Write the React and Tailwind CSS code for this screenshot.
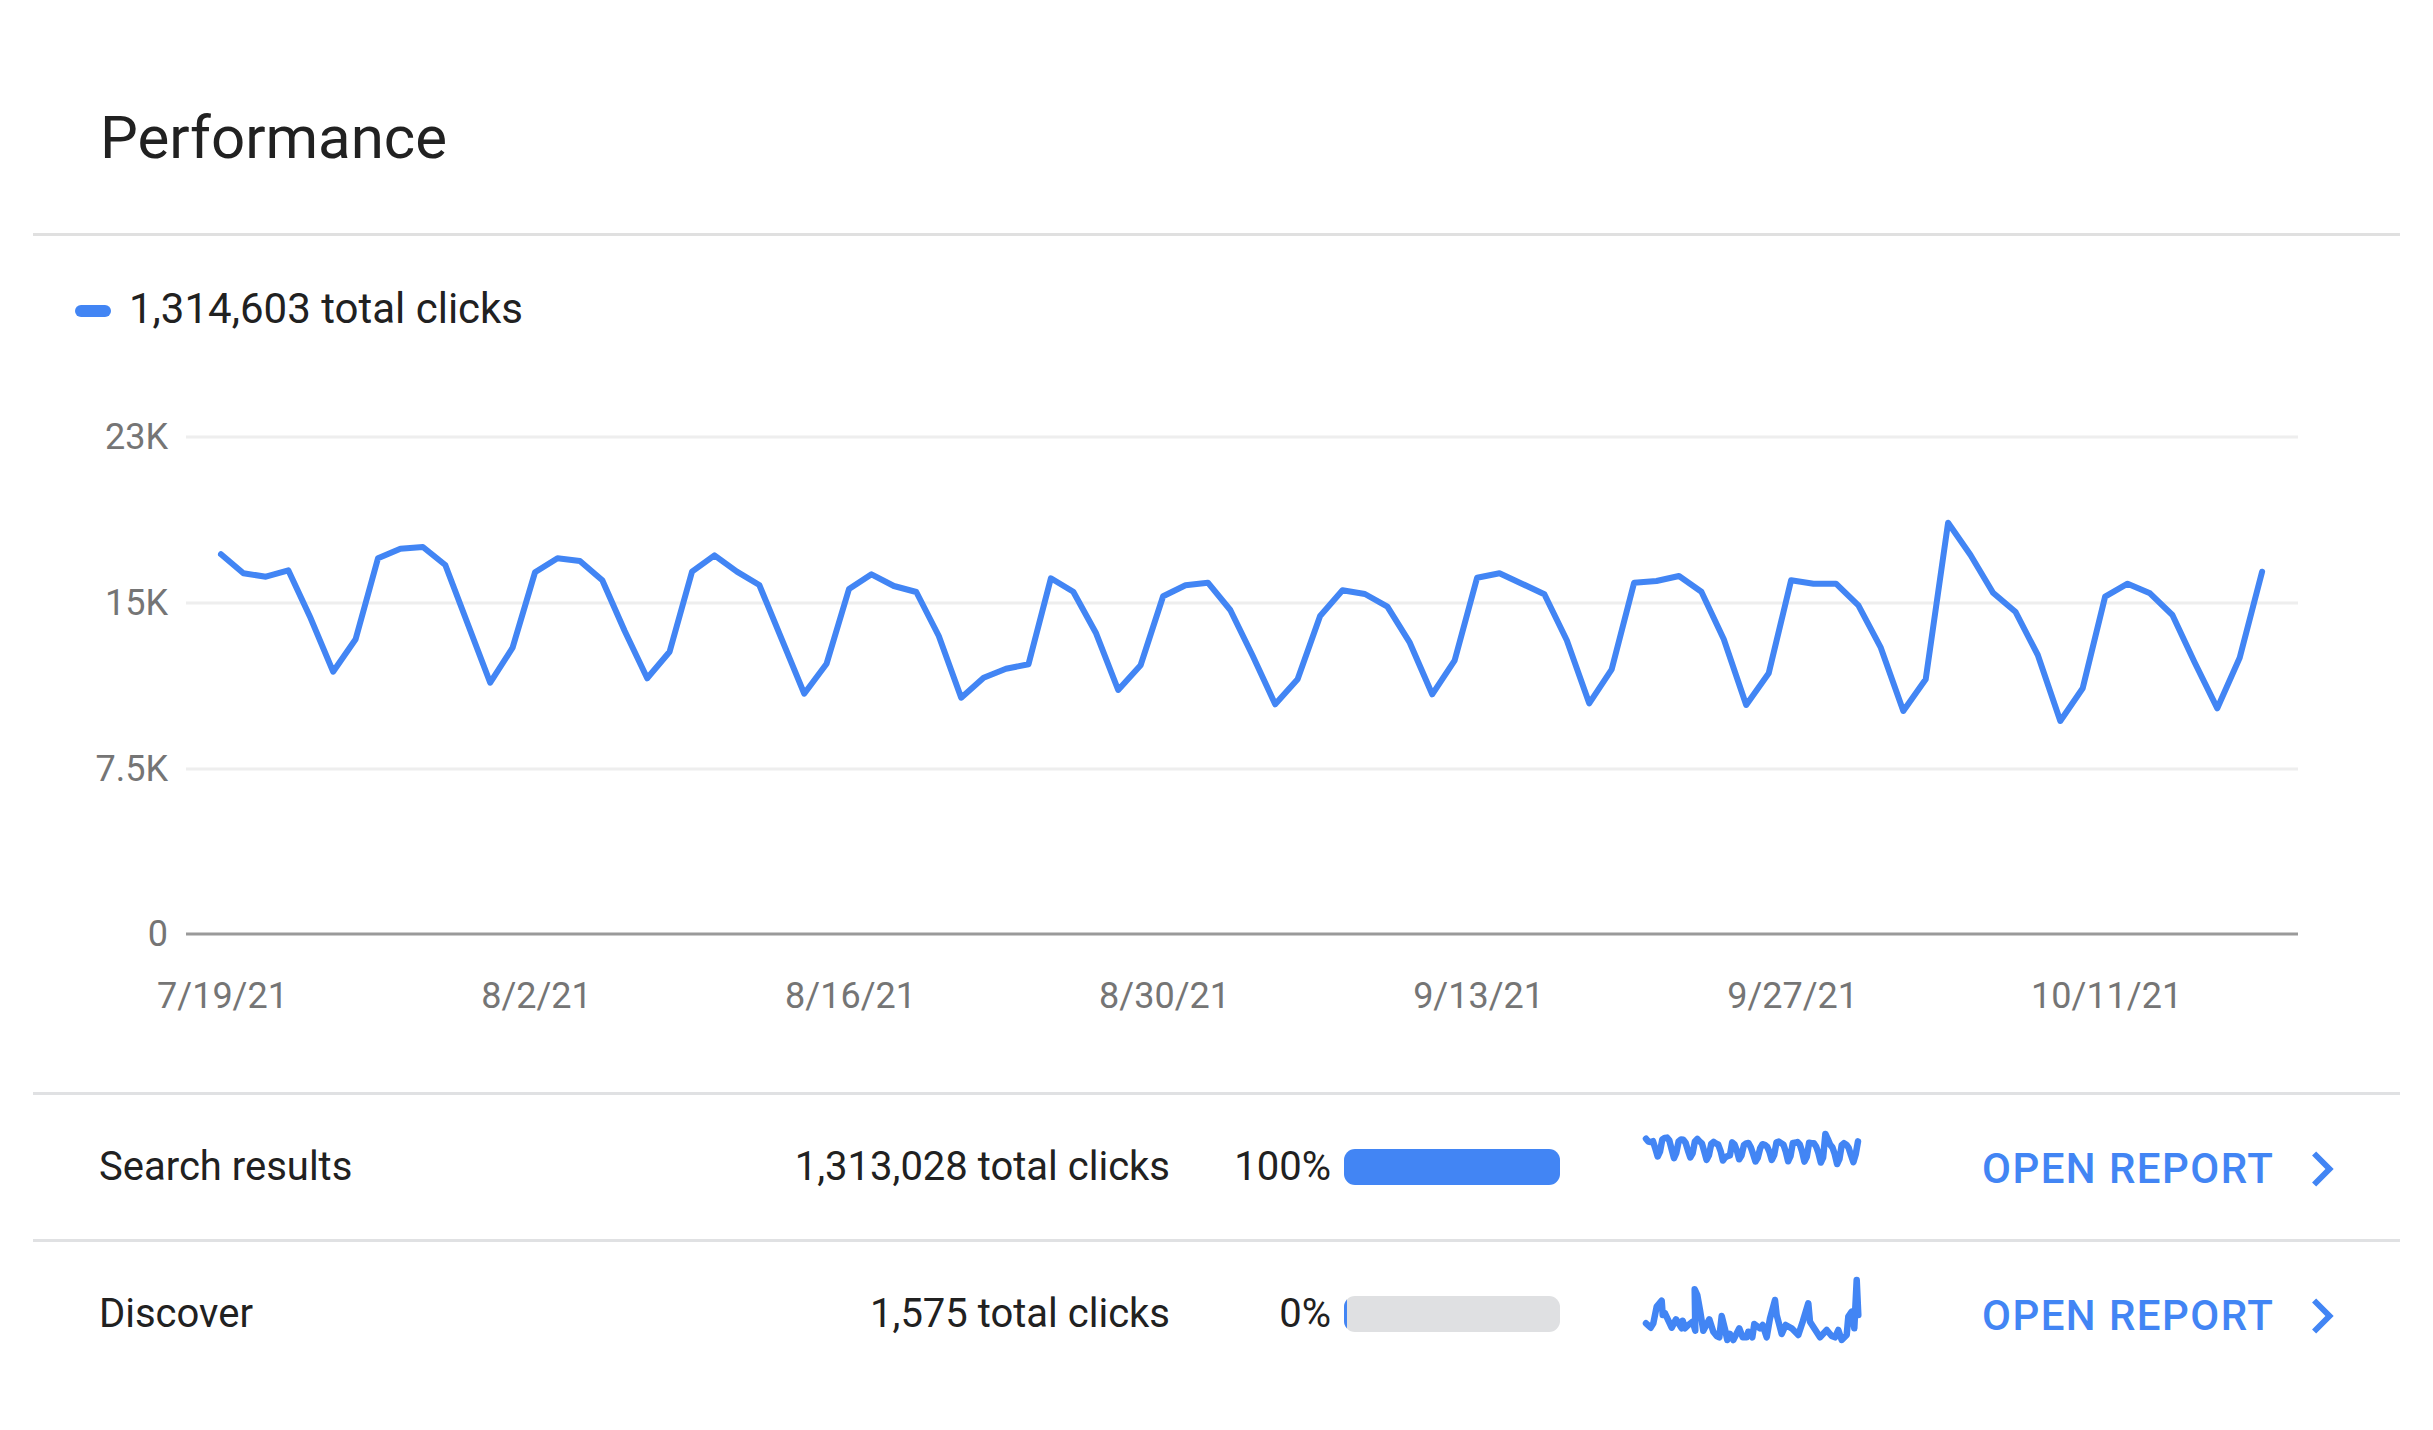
const clicks = [
	160, 217, 227, 208, 352, 512, 415, 172, 143, 138, 192, 368, 545, 440, 214, 172, 180, 238, 390, 532, 452, 212, 163,
	212, 252, 415, 578, 488, 264, 220, 255, 273, 405, 590, 530, 503, 490, 232, 272, 395, 567, 493, 286, 253, 245, 327,
	465, 610, 535, 345, 268, 279, 317, 425, 580, 478, 230, 217, 248, 280, 418, 607, 505, 245, 240, 225, 272, 415, 612,
	517, 238, 248, 248, 313, 440, 630, 535, 65, 162, 275, 332, 462, 660, 562, 287, 248, 277, 342, 485, 622, 470, 212,
].map((y) => 501 + y / 3);

const xAt = (i) => 221 + i * 22.43;
const mainLine = clicks.map((y, i) => `${xAt(i).toFixed(1)},${y.toFixed(1)}`).join(" ");

const searchSpark = clicks
	.map((y, i) => `${(1646 + i * 2.33).toFixed(1)},${(1134 + ((y - 523) * 30) / 198).toFixed(1)}`)
	.join(" ");

const discoverSpark = [
	[78, 190], [92, 203], [100, 190], [110, 140], [125, 122], [128, 165], [135, 160], [155, 203], [168, 178], [185, 205],
	[188, 182], [195, 205], [205, 195], [218, 185], [226, 212], [224, 88], [232, 105], [240, 150], [250, 212], [268, 178],
	[280, 215], [290, 228], [298, 232], [305, 168], [315, 208], [322, 240], [330, 222], [340, 240], [358, 205], [368, 232],
	[380, 232], [385, 215], [397, 232], [403, 192], [420, 205], [428, 195], [440, 232], [450, 175], [465, 120], [470, 165],
	[485, 222], [497, 195], [515, 205], [535, 225], [548, 185], [565, 130], [570, 185], [600, 232], [620, 210], [635, 228],
	[645, 232], [655, 210], [665, 240], [680, 225], [685, 170], [695, 155], [703, 205], [710, 60], [715, 165],
]
	.map(([x, y]) => `${(1620 + x / 3).toFixed(1)},${(1260 + y / 3).toFixed(1)}`)
	.join(" ");

const yTicks = [
	{ label: "23K", y: 437 },
	{ label: "15K", y: 603 },
	{ label: "7.5K", y: 769 },
];

const xTicks = [
	{ label: "7/19/21", i: 0 },
	{ label: "8/2/21", i: 14 },
	{ label: "8/16/21", i: 28 },
	{ label: "8/30/21", i: 42 },
	{ label: "9/13/21", i: 56 },
	{ label: "9/27/21", i: 70 },
	{ label: "10/11/21", i: 84 },
];

function Chart() {
	return (
		<svg className="block w-[2367px] h-[680px]" viewBox="33 400 2367 680">
			{yTicks.map((t) => (
				<g key={t.label}>
					<line x1="186" x2="2298" y1={t.y} y2={t.y} stroke="#eeeeee" strokeWidth="3" />
					<text x="168" y={t.y + 12} textAnchor="end" fontSize="36" fill="#757575">
						{t.label}
					</text>
				</g>
			))}
			<line x1="186" x2="2298" y1="934" y2="934" stroke="#9a9a9a" strokeWidth="3" />
			<text x="168" y="946" textAnchor="end" fontSize="36" fill="#757575">
				0
			</text>
			{xTicks.map((t) => (
				<text key={t.label} x={xAt(t.i) + 1.5} y="1008" textAnchor="middle" fontSize="36" fill="#757575">
					{t.label}
				</text>
			))}
			<polyline points={mainLine} fill="none" stroke="#4285f4" strokeWidth="6" strokeLinejoin="round" strokeLinecap="round" />
		</svg>
	);
}

function Row({ name, total, percent, fill, viewBox, points }) {
	return (
		<div className="flex h-[147px] items-center border-t-[3px] border-[#e0e1e3] text-[40px]">
			<div className="w-[600px] pl-[66px]">{name}</div>
			<div className="w-[537px] text-right">{total}</div>
			<div className="w-[161px] text-right">{percent}</div>
			<div className="ml-[13px] h-[36px] w-[216px] overflow-hidden rounded-[11px] bg-[#dfe0e2]">
				<div className={`h-full bg-[#4285f4] ${fill}`} />
			</div>
			<svg className="ml-[82px] h-[144px] w-[220px]" viewBox={viewBox}>
				<polyline points={points} fill="none" stroke="#4285f4" strokeWidth="6.5" strokeLinejoin="round" strokeLinecap="round" />
			</svg>
			<div className="ml-[120px] mt-[3px] flex items-center">
				<span className="w-[305px] text-[42px] font-medium tracking-[1.45px] text-[#4285f4]">OPEN REPORT</span>
				<svg className="h-[70px] w-[70px] fill-[#4285f4]" viewBox="0 0 24 24">
					<path d="M10 6 8.59 7.41 13.17 12l-4.58 4.59L10 18l6-6z" />
				</svg>
			</div>
		</div>
	);
}

export default function App() {
	return (
		<div className="h-[1430px] w-[2433px] bg-white px-[33px] font-[family-name:Roboto,sans-serif] text-[#212121]">
			<div className="flex h-[236px] items-center border-b-[3px] border-[#e0e0e0] pt-[42px] pl-[67px] text-[60px]">
				Performance
			</div>
			<div className="flex h-[164px] items-start pl-[42px] pt-[44px]">
				<div className="mt-[25px] h-[12px] w-[36px] rounded-full bg-[#4285f4]" />
				<div className="ml-[18px] mt-[1px] text-[42px] leading-[56px]">1,314,603 total clicks</div>
			</div>
			<Chart />
			<div className="mt-[12px]">
				<Row
					name="Search results"
					total="1,313,028 total clicks"
					percent="100%"
					fill="w-full"
					viewBox="1642 1095 220 144"
					points={searchSpark}
				/>
				<Row
					name="Discover"
					total="1,575 total clicks"
					percent="0%"
					fill="w-[3px]"
					viewBox="1642 1242 220 144"
					points={discoverSpark}
				/>
			</div>
		</div>
	);
}
